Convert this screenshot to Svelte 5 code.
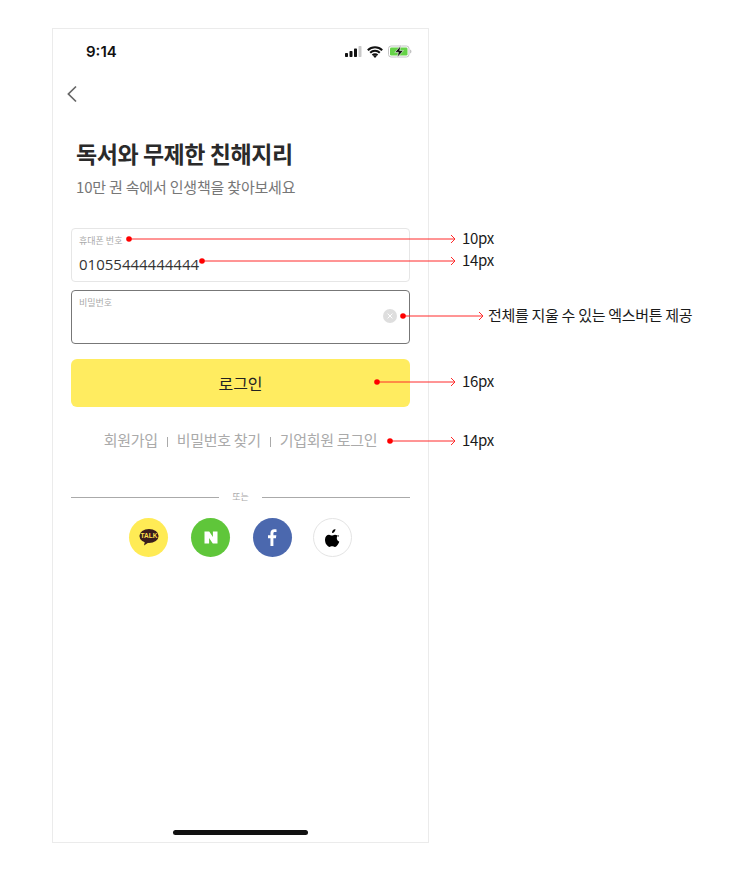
<script>
  const marks = [
    { x1: 129, x2: 455, y: 239, tx: 462, label: '10px' },
    { x1: 202, x2: 455, y: 261, tx: 462, label: '14px' },
    { x1: 403, x2: 483, y: 316, tx: 488, label: '전체를 지울 수 있는 엑스버튼 제공' },
    { x1: 377, x2: 455, y: 382, tx: 462, label: '16px' },
    { x1: 390, x2: 455, y: 441, tx: 462, label: '14px' }
  ];
</script>

<div class="canvas">
  <main class="phone">
    <div class="status">
      <span class="time">9:14</span>
      <div class="status-icons">
        <svg width="17" height="11" viewBox="0 0 17 11">
          <rect x="0" y="7" width="3" height="4" rx="0.7" fill="#111" />
          <rect x="4.500" y="5" width="3" height="6" rx="0.7" fill="#111" />
          <rect x="9" y="2.500" width="3" height="8.500" rx="0.7" fill="#111" />
          <rect x="13.500" y="0" width="3" height="11" rx="0.7" fill="#c9c9c9" />
        </svg>
        <svg width="16" height="12" viewBox="0 0 16 12">
          <path d="M.8 4.300a10.200 10.200 0 0 1 14.400 0M3.200 6.800a6.800 6.800 0 0 1 9.600 0M5.500 9.200a3.500 3.500 0 0 1 5 0" fill="none" stroke="#111" stroke-width="2" />
          <path d="M6.400 10.200 8 8.800l1.600 1.400L8 12z" fill="#111" />
        </svg>
        <svg width="24" height="13" viewBox="0 0 24 13">
          <rect x="0.500" y="1" width="20.500" height="11" rx="2.600" fill="none" stroke="#c4c4c4" />
          <rect x="2" y="2.500" width="17.500" height="8" rx="1.300" fill="#66d348" />
          <path d="M22 4.500v4a2 2 0 0 0 1.500-2 2 2 0 0 0-1.500-2z" fill="#c4c4c4" />
          <path d="M13 .6 6.800 7.300h3.600L9.200 12.600l6.200-7h-3.700z" fill="#111" stroke="#fff" stroke-width="0.6" />
        </svg>
      </div>
    </div>

    <button class="back" aria-label="뒤로">
      <svg width="12" height="18" viewBox="0 0 12 18">
        <path d="M10 1.500 2.400 9l7.600 7.500" fill="none" stroke="#666" stroke-width="1.700" />
      </svg>
    </button>

    <h1>독서와 무제한 친해지리</h1>
    <p class="sub">10만 권 속에서 인생책을 찾아보세요</p>

    <div class="form">
      <div class="field">
        <span class="label">휴대폰 번호</span>
        <span class="value">01055444444444</span>
      </div>
      <div class="field active">
        <span class="label">비밀번호</span>
        <span class="clear">
          <svg width="14" height="14" viewBox="0 0 14 14">
            <circle cx="7" cy="7" r="7" fill="#dedede" />
            <path d="M4.600 4.600l4.800 4.800M9.400 4.600l-4.800 4.800" stroke="#fff" stroke-width="1" />
          </svg>
        </span>
      </div>
      <button class="login">로그인</button>
    </div>

    <nav class="links">
      <span>회원가입</span><i></i><span>비밀번호 찾기</span><i></i><span>기업회원 로그인</span>
    </nav>

    <div class="or"><b></b><span>또는</span><b></b></div>

    <div class="social">
      <span class="sns kakao">
        <svg width="20" height="17" viewBox="0 0 20 17">
          <ellipse cx="10" cy="7" rx="9.600" ry="7" fill="#3a1d1d" />
          <path d="M6 12l-1 4.600 4.500-3z" fill="#3a1d1d" />
          <text x="10" y="9.300" text-anchor="middle" class="talk">TALK</text>
        </svg>
      </span>
      <span class="sns naver">
        <svg width="14" height="13" viewBox="0 0 14 13">
          <path d="M.5.500h4.700l3.700 5.500V.500h4.600v12H8.800L5.100 7v5.500H.5z" fill="#fff" />
        </svg>
      </span>
      <span class="sns fb">
        <svg width="9" height="19" viewBox="0 0 11 21">
          <path d="M3 21V11.400H0V7.700h3V5.100C3 1.900 4.900.4 7.600.4c1.300 0 2.400.1 2.800.2v3.300H8.400c-1.500 0-1.800.7-1.800 1.800v2h3.600l-.5 3.700H6.600V21z" fill="#fff" />
        </svg>
      </span>
      <span class="sns apple">
        <svg width="15" height="18" viewBox="0 0 15 18">
          <path d="M10.400 0c.1 1-.3 2-.9 2.700-.6.800-1.600 1.300-2.500 1.200-.1-1 .4-2 .9-2.600C8.500.6 9.600.100 10.400 0zM13.700 6.100c-1.300.8-1.900 1.900-1.900 3.200 0 1.500.9 2.700 2.500 3.400-.4 1.100-.9 2.100-1.600 3.100-.8 1.100-1.600 2.100-2.800 2.100-1.100 0-1.500-.7-2.800-.7s-1.700.7-2.800.7c-1.200 0-2-1.100-2.900-2.300C.3 14 0 12 0 10.400c0-3 2-4.700 4-4.700 1.100 0 2.100.8 2.900.8.700 0 1.800-.8 3.100-.8 1.500 0 2.800.7 3.700 2.400z" fill="#000" />
        </svg>
      </span>
    </div>

    <div class="home"></div>
  </main>

  <svg class="lines" width="752" height="876" viewBox="0 0 752 876">
    {#each marks as m}
      <line x1={m.x1} x2={m.x2} y1={m.y} y2={m.y} stroke="#ff2a2a" stroke-width="1" />
      <circle cx={m.x1} cy={m.y} r="2.800" fill="#f00" />
      <path d="M{m.x2 - 4} {m.y - 4}l4 4-4 4" fill="none" stroke="#ff2a2a" stroke-width="1" />
    {/each}
  </svg>
  {#each marks as m}
    <span class="note" style:left="{m.tx}px" style:top="{m.y - 12}px">{m.label}</span>
  {/each}
</div>

<style>
  :global(body) {
    margin: 0;
    background: #fff;
  }
  .canvas {
    position: relative;
    width: 752px;
    height: 876px;
    padding: 28px 0 0 52px;
    box-sizing: border-box;
    overflow: hidden;
    font-family: "Noto Sans CJK KR", "Noto Sans", sans-serif;
    color: #222;
  }
  .phone {
    position: relative;
    width: 377px;
    height: 815px;
    box-sizing: border-box;
    border: 1px solid #ebebeb;
    padding: 0 18px;
    display: flex;
    flex-direction: column;
  }
  .status {
    display: flex;
    justify-content: space-between;
    align-items: center;
    height: 45px;
    margin: 0 -18px;
    padding: 0 16px 0 33px;
  }
  .time {
    font-family: Inter, "Liberation Sans", sans-serif;
    font-size: 15px;
    font-weight: 600;
    color: #111;
  }
  .status-icons {
    display: flex;
    align-items: center;
    gap: 5px;
  }
  .back {
    align-self: flex-start;
    margin: 11px 0 0 -5px;
    padding: 0;
    border: 0;
    background: none;
    height: 18px;
    display: flex;
  }
  h1 {
    margin: 33px 0 0 5px;
    font-size: 23px;
    line-height: 34px;
    font-weight: 700;
    letter-spacing: -0.45px;
    color: #2a2a2a;
  }
  .sub {
    margin: 6px 0 0 5px;
    font-size: 15px;
    line-height: 22px;
    letter-spacing: -0.2px;
    color: #777;
  }
  .form {
    margin-top: 30px;
    display: flex;
    flex-direction: column;
    width: 339px;
    gap: 8px;
  }
  .field {
    position: relative;
    height: 54px;
    box-sizing: border-box;
    border: 1px solid #e6e6e6;
    border-radius: 4px;
    padding: 6px 7px;
    display: flex;
    flex-direction: column;
  }
  .field.active {
    border-color: #777;
  }
  .label {
    font-size: 9px;
    line-height: 12px;
    color: #aaa;
  }
  .value {
    margin-top: 7px;
    font-family: "Open Sans", sans-serif;
    font-size: 15px;
    line-height: 20px;
    color: #333;
  }
  .clear {
    position: absolute;
    right: 12px;
    top: 18px;
    display: flex;
  }
  .login {
    margin-top: 7px;
    height: 48px;
    border: 0;
    border-radius: 6px;
    background: #ffec60;
    font: inherit;
    font-size: 16px;
    color: #222;
  }
  .links {
    margin-top: 22px;
    width: 339px;
    display: flex;
    justify-content: center;
    align-items: center;
    font-size: 15px;
    line-height: 22px;
    letter-spacing: -0.3px;
    color: #aaa;
  }
  .links i {
    width: 1px;
    height: 10px;
    margin: 4px 9px 0;
    background: #aaa;
  }
  .or {
    margin-top: 40px;
    width: 339px;
    display: flex;
    align-items: center;
    font-size: 9px;
    line-height: 12px;
    color: #aaa;
  }
  .or b {
    flex: 1;
    height: 1px;
    background: #aaa;
  }
  .or span {
    margin: 0 13px;
  }
  .social {
    margin-top: 15px;
    width: 339px;
    display: flex;
    justify-content: center;
    gap: 23px;
    height: 39px;
  }
  .sns {
    width: 39px;
    height: 39px;
    box-sizing: border-box;
    border-radius: 50%;
    display: flex;
    align-items: center;
    justify-content: center;
  }
  .kakao { background: #ffeb55; }
  .naver { background: #5fc63a; }
  .fb { background: #4b68ae; }
  .apple {
    background: #fff;
    border: 1px solid #e4e4e4;
    margin-left: -2px;
  }
  .talk {
    font-family: "Liberation Sans", sans-serif;
    font-size: 6.500px;
    font-weight: 700;
    fill: #ffe14d;
  }
  .home {
    position: absolute;
    left: 120px;
    bottom: 7px;
    width: 135px;
    height: 5px;
    border-radius: 3px;
    background: #111;
  }
  .lines {
    position: absolute;
    left: 0;
    top: 0;
    pointer-events: none;
  }
  .note {
    position: absolute;
    font-size: 15px;
    line-height: 22px;
    letter-spacing: -0.3px;
    color: #1a1a1a;
    white-space: nowrap;
  }
</style>
